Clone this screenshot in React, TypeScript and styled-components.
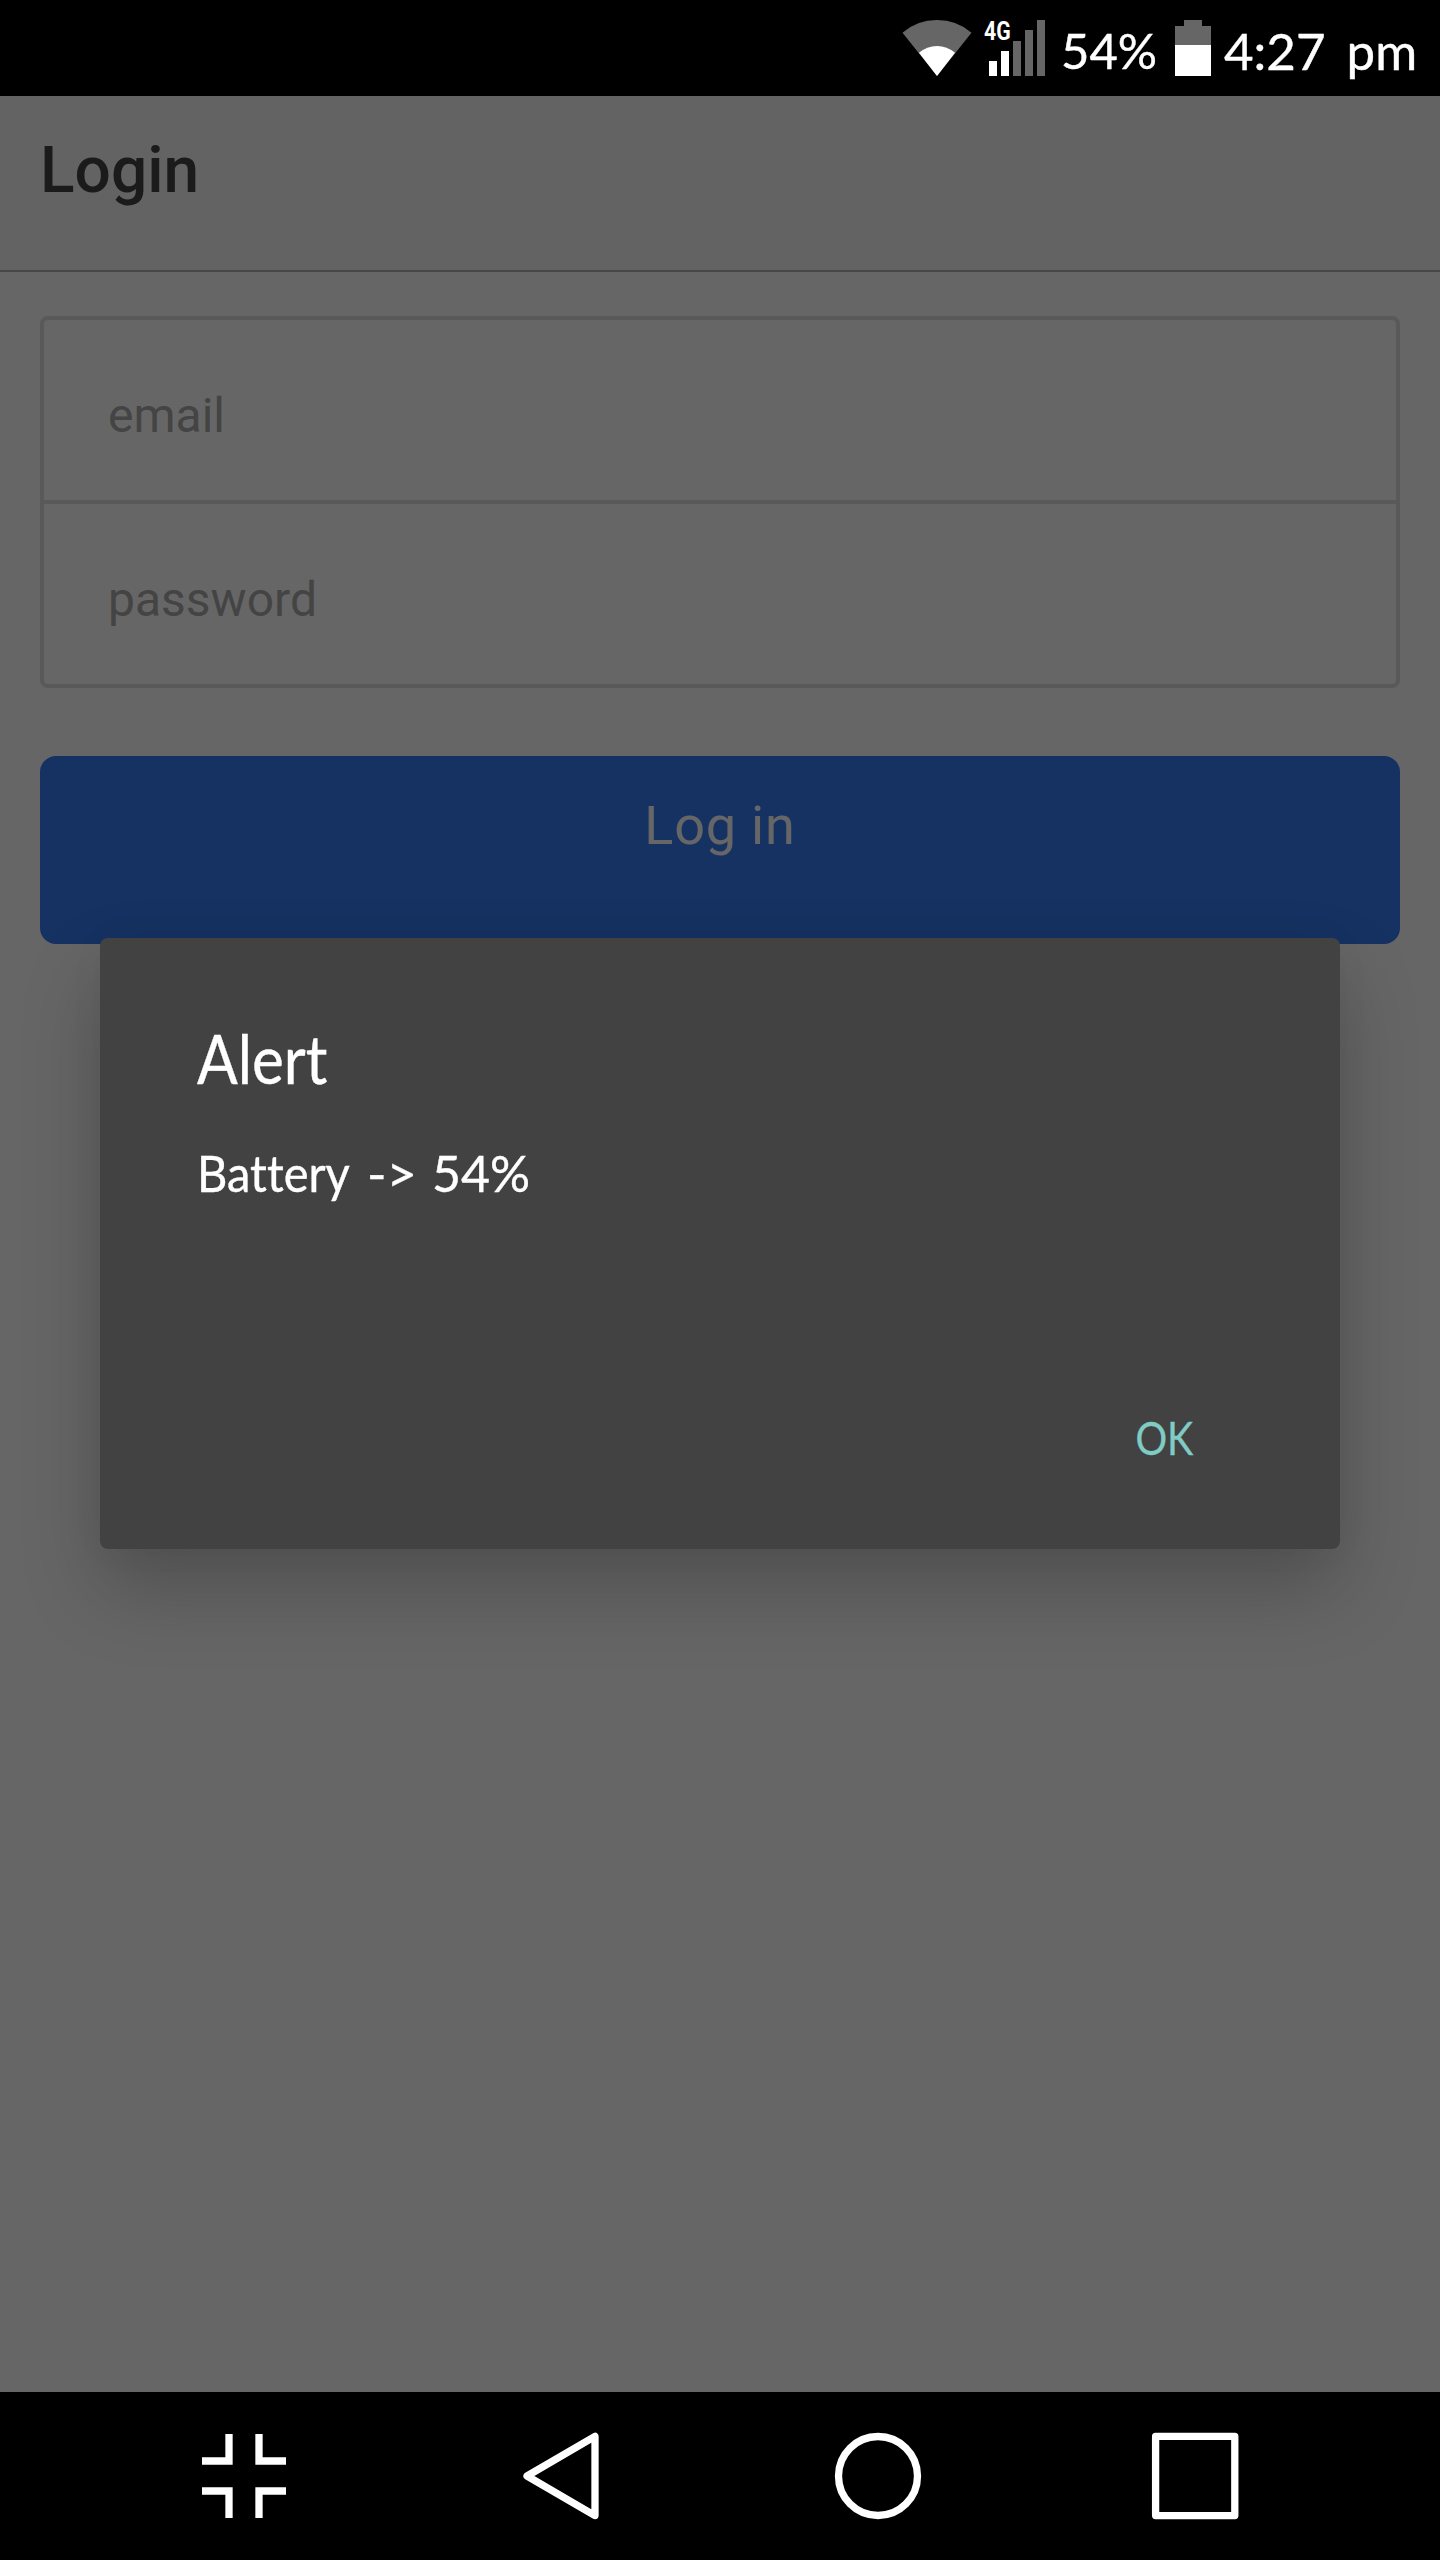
import React from "react";
import styled, { createGlobalStyle } from "styled-components";

const GlobalStyle = createGlobalStyle`
  * { box-sizing: border-box; }
  body { margin: 0; background: #000; }
`;

const Phone = styled.div`
  width: 1440px;
  height: 2560px;
  display: flex;
  flex-direction: column;
  background: #000;
  font-family: Roboto, "Liberation Sans", sans-serif;
  overflow: hidden;
`;

const StatusBar = styled.header`
  height: 96px;
  display: flex;
  align-items: flex-start;
  padding-left: 902px;
  background: #000;
  color: #fff;
`;

const StatusIcon = styled.svg`
  flex: none;
  display: block;
`;

const Signal = styled.div`
  flex: none;
  position: relative;
  width: 64px;
  height: 96px;
  margin-left: 13px;
`;

const NetworkType = styled.span`
  position: absolute;
  left: -1px;
  top: 17px;
  font-size: 25px;
  line-height: 30px;
  font-weight: 700;
  transform: scaleX(0.85);
  transform-origin: left;
`;

const StatusText = styled.span<{ $size: number; $line: number; $width: number; $gap: number }>`
  flex: none;
  width: ${(p) => p.$width}px;
  margin-left: ${(p) => p.$gap}px;
  font-family: Lato, sans-serif;
  font-size: ${(p) => p.$size}px;
  line-height: ${(p) => p.$line}px;
  word-spacing: 8px;
  white-space: nowrap;
  -webkit-text-stroke: 0.4px currentColor;
`;

const Screen = styled.main`
  position: relative;
  height: 2296px;
  background: #fff;
`;

const TitleBar = styled.div`
  height: 176px;
  padding-left: 40px;
  background: #f7f7f7;
  border-bottom: 2px solid #b2b2b2;
`;

const Title = styled.h1`
  margin: 0;
  font-size: 64px;
  line-height: 150px;
  font-weight: 500;
  color: #444;
`;

const Form = styled.div`
  display: flex;
  flex-direction: column;
  padding: 44px 40px 0;
`;

const FieldGroup = styled.div`
  border: 4px solid #dedede;
  border-radius: 8px;
`;

const Field = styled.div`
  height: 180px;
  display: flex;
  align-items: center;
  padding: 11px 0 0 64px;
  font-size: 48px;
  color: #aaa;

  & + & {
    height: 184px;
    border-top: 4px solid #dedede;
  }
`;

const LoginButton = styled.button`
  height: 188px;
  margin-top: 68px;
  padding: 0 0 48px;
  border: 0;
  border-radius: 16px;
  background: #387ef5;
  color: #fff;
  font-family: inherit;
  font-size: 54px;
  line-height: 140px;
  letter-spacing: 0.8px;
`;

const Scrim = styled.div`
  position: absolute;
  inset: 0;
  display: flex;
  justify-content: center;
  align-items: flex-start;
  padding-top: 842px;
  background: rgba(0, 0, 0, 0.6);
`;

const Dialog = styled.section`
  width: 1240px;
  height: 611px;
  display: flex;
  flex-direction: column;
  padding: 91px 147px 0 97px;
  border-radius: 8px;
  background: #424242;
  color: #fff;
  box-shadow: 0 40px 80px rgba(0, 0, 0, 0.22), 0 0 40px rgba(0, 0, 0, 0.03);
  font-family: Lato, sans-serif;
  font-variant-ligatures: none;
`;

const DialogTitle = styled.h2`
  margin: 0;
  font-size: 67px;
  line-height: 58px;
  font-weight: 400;
  transform: scaleX(0.9);
  transform-origin: left;
  -webkit-text-stroke: 0.4px currentColor;
`;

const DialogMessage = styled.p`
  display: flex;
  margin: 61px 0 0;
  font-size: 50px;
  line-height: 50px;
  white-space: pre;
  -webkit-text-stroke: 0.4px currentColor;
`;

const Word = styled.span<{ $width: number; $scale?: number }>`
  flex: none;
  width: ${(p) => p.$width}px;
  transform: scaleX(${(p) => p.$scale ?? 1});
  transform-origin: left;
`;

const DialogAction = styled.button`
  align-self: flex-end;
  margin-top: 215px;
  padding: 0;
  border: 0;
  background: none;
  color: #80cbc4;
  font-family: inherit;
  font-size: 46px;
  line-height: 50px;
  transform: scaleX(0.86);
  transform-origin: right;
  -webkit-text-stroke: 0.3px currentColor;
`;

const NavBar = styled.nav`
  height: 168px;
  display: flex;
  align-items: center;
  gap: 229px;
  padding-left: 200px;
  background: #000;
`;

const NavIcon = styled.svg`
  flex: none;
  width: 88px;
  height: 88px;
  fill: none;
  stroke: #fff;
  stroke-width: 7.3;
`;

const signalBars = [
  { x: 4, top: 61, on: true },
  { x: 16, top: 51, on: true },
  { x: 28, top: 41, on: false },
  { x: 40, top: 30, on: false },
  { x: 52, top: 20, on: false },
];

export default function App() {
  return (
    <>
      <GlobalStyle />
      <Phone>
        <StatusBar>
          <StatusIcon width="70" height="96" viewBox="0 0 70 96">
            <path d="M35 76 L0.5 32.7 Q15 20 35 20 T69.5 32.7 Z" fill="#666" />
            <path d="M35 76 L17 52.8 Q25 46 35 46 T53 52.8 Z" fill="#fff" />
          </StatusIcon>
          <Signal>
            <NetworkType>4G</NetworkType>
            <StatusIcon width="64" height="96" viewBox="0 0 64 96">
              {signalBars.map((b) => (
                <rect key={b.x} x={b.x} y={b.top} width="8" height={76 - b.top} fill={b.on ? "#fff" : "#666"} />
              ))}
            </StatusIcon>
          </Signal>
          <StatusText $size={49} $line={100} $width={114} $gap={12}>54%</StatusText>
          <StatusIcon width="36" height="96" viewBox="0 0 36 96">
            <path d="M9 20H27V26H36V45H0V26H9Z" fill="#666" />
            <rect y="45" width="36" height="31" fill="#fff" />
          </StatusIcon>
          <StatusText $size={51} $line={102} $width={216} $gap={13}>4:27 pm</StatusText>
        </StatusBar>
        <Screen>
          <TitleBar>
            <Title>Login</Title>
          </TitleBar>
          <Form>
            <FieldGroup>
              <Field>email</Field>
              <Field>password</Field>
            </FieldGroup>
            <LoginButton>Log in</LoginButton>
          </Form>
          <Scrim>
            <Dialog>
              <DialogTitle>Alert</DialogTitle>
              <DialogMessage>
                <Word $width={170} $scale={0.94}>Battery </Word>
                <Word $width={65} $scale={1.05}>-&gt; </Word>
                <Word $width={100}>54%</Word>
              </DialogMessage>
              <DialogAction>OK</DialogAction>
            </Dialog>
          </Scrim>
        </Screen>
        <NavBar>
          <NavIcon viewBox="0 0 88 88">
            <path d="M29 2V29H2M59 2V29H86M29 86V59H2M59 86V59H86" />
          </NavIcon>
          <NavIcon viewBox="0 0 88 88">
            <path d="M10 44L78 4.4V83.6Z" strokeLinejoin="round" />
          </NavIcon>
          <NavIcon viewBox="0 0 88 88">
            <circle cx="44" cy="44" r="39.5" />
          </NavIcon>
          <NavIcon viewBox="0 0 88 88">
            <rect x="4.6" y="4.4" width="79.2" height="79.2" strokeLinejoin="round" />
          </NavIcon>
        </NavBar>
      </Phone>
    </>
  );
}
